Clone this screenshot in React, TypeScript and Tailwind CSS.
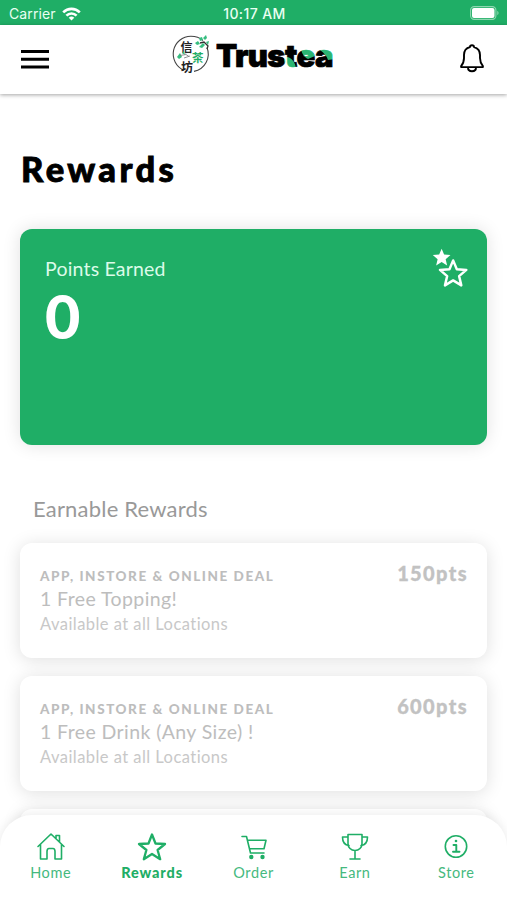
import type { ReactNode } from "react"

const STAR = "M12 1.8 15 9 22.8 9.6 16.9 14.7 18.7 22.3 12 18.2 5.3 22.3 7.1 14.7 1.2 9.6 9 9Z"

const rewards = [
  { tag: "APP, INSTORE & ONLINE DEAL", title: "1 Free Topping!", points: "150pts" },
  { tag: "APP, INSTORE & ONLINE DEAL", title: "1 Free Drink (Any Size) !", points: "600pts" },
]

function StatusBar() {
  return (
    <div className="grid h-[25px] shrink-0 grid-cols-3 items-center bg-[#1fae66] pr-[7px] pl-[9px] text-[#e9fff2]">
      <div className="flex items-center gap-[6px] pt-[2px] font-['Inter'] text-[14px]">
        <span className="tracking-[0.1px]">Carrier</span>
        <svg width="19" height="14" viewBox="0 0 19 14" fill="none" stroke="white" strokeWidth="2.6">
          <path d="M1.2 5.3a11.8 11.8 0 0 1 16.6 0" />
          <path d="M4.4 8.6a7.2 7.2 0 0 1 10.2 0" />
          <path d="M9.5 13.6 6.7 10.8a4 4 0 0 1 5.6 0Z" fill="white" stroke="none" />
        </svg>
      </div>
      <div className="pt-[2px] text-center font-['Inter'] text-[14px] font-medium tracking-[0.4px] whitespace-nowrap">10:17 AM</div>
      <svg className="justify-self-end" width="30" height="14" viewBox="0 0 30 14">
        <rect x="0.6" y="0.6" width="25.3" height="12.8" rx="3.6" fill="none" stroke="#8ed7b0" strokeWidth="1.1" />
        <rect x="2" y="2" width="22.5" height="10" rx="2" fill="white" />
        <path d="M27.3 4.8c1.7.7 1.7 3.7 0 4.4Z" fill="#8ed7b0" />
      </svg>
    </div>
  )
}

function Logo() {
  return (
    <svg className="overflow-visible" width="166" height="46" viewBox="0 0 166 46">
      {/* Seal */}
      <g fill="none" stroke="#444" strokeWidth="1.1">
        <path d="M13 36.3A17.7 17.7 0 0 1 20 2.3c5 0 9 1.6 12 4.2" />
        <path d="M36 13.5A17.7 17.7 0 0 1 23 37.4" />
      </g>
      <g fontFamily="'Noto Sans CJK TC', sans-serif" fontWeight="700">
        <text x="9.5" y="17.5" fontSize="12" fill="#222">信</text>
        <text x="21" y="28" fontSize="11.5" fill="#1fae66">茶</text>
        <text x="10" y="37.5" fontSize="12" fill="#222">坊</text>
      </g>
      <path d="m24 9 3-2 2 3-3 1Zm4-5 3-1 1 3-3 1Zm4 0 3-3 1 3-2 2Zm3 4 3-1-1 4Zm-7 5 4-4 2 2-3 3Zm-22 10 3-4 2 4-3 2Zm5-4 2-2 1 4Z" fill="#36bd80" />
      <path d="m29 9 4-1 4 4-1 3" fill="none" stroke="#333" strokeWidth="1.3" />
      <path d="M9 21.5l6-1 3 2M13 24l6-2" fill="none" stroke="#777" strokeWidth="0.8" />

      {/* Wordmark, tea leaves painted into the last letters */}
      <defs>
        <pattern id="leaves" patternUnits="userSpaceOnUse" width="180" height="46">
          <rect width="180" height="46" fill="black" />
          <g fill="#2bb673">
            <path d="M113 23c5-1 11 3 12 12h-8c-3-3-4-7-4-12Z" />
            <path d="M130 15c6-2 11 0 14 7l-7 3c-4-2-6-5-7-10Z" />
            <path d="M149 16c7-4 14-1 15 9l-7 1c-1-4-4-7-8-10Z" />
          </g>
        </pattern>
      </defs>
      <text x="45" y="33" fontFamily="'Inter', sans-serif" fontWeight="900" fontSize="31" letterSpacing="-0.6" fill="url(#leaves)" stroke="url(#leaves)" strokeWidth="0.7">Trustea</text>
    </svg>
  )
}

function Header() {
  return (
    <header className="z-10 flex h-[69px] shrink-0 items-start justify-between bg-white pr-[22px] pl-[21px] shadow-[0_1px_4px_rgba(0,0,0,0.36)]">
      <svg className="mt-[24px]" width="28" height="21" viewBox="0 0 28 21" stroke="black" strokeWidth="3">
        <path d="M0 2.5h28M0 10.3h28M0 18.1h28" />
      </svg>
      <div className="mt-[9px]"><Logo /></div>
      <svg className="mt-[19px]" width="26" height="29" viewBox="0 0 26 29" fill="none" stroke="black" strokeWidth="1.9" strokeLinejoin="round">
        <path d="M11 3.1c0-2.4 4-2.4 4 0 4 1 6 4 6 8v3c0 4 .8 5.5 2.9 8v1H2.1v-1C4.2 19.6 5 18 5 14v-3c0-4 2-7 6-7.9Z" />
        <path d="M9 23.5c0 5 8 5 8 0" />
      </svg>
    </header>
  )
}

function PointsCard() {
  return (
    <section className="flex h-[216px] items-start justify-between rounded-[12px] bg-[#1fae66] pr-[18px] pl-[25px] text-white shadow-[0_0_18px_rgba(0,0,0,0.12)]">
      <div>
        <p className="mt-[27px] text-[19.5px] leading-[26px] tracking-[0.2px] text-[#dcfbe9]">Points Earned</p>
        <p className="text-[61px] leading-[67px] font-black">0</p>
      </div>
      <svg className="mt-[19px]" width="38" height="40" viewBox="0 0 38 40">
        <path d={STAR} transform="translate(.8 -.8) scale(.82)" fill="white" />
        <path d={STAR} transform="translate(7.5 10.2) scale(1.22)" fill="#1fae66" stroke="white" strokeWidth="2" strokeLinejoin="round" />
      </svg>
    </section>
  )
}

function RewardCard({ tag, title, points }: (typeof rewards)[number]) {
  return (
    <li className="flex h-[115px] shrink-0 items-start justify-between rounded-[12px] bg-white px-[20px] shadow-[0_2px_18px_rgba(0,0,0,0.13)]">
      <div className="pt-[23px] whitespace-nowrap text-[#bdbdbd]">
        <p className="text-[13.5px] leading-[20px] font-black tracking-[1.57px]">{tag}</p>
        <p className="text-[19.5px] leading-[26px] tracking-[0.4px]">{title}</p>
        <p className="pt-px text-[16.5px] leading-[22px] tracking-[0.45px] text-[#c8c8c8]">Available at all Locations</p>
      </div>
      <p className="mt-[17px] mr-[-1px] text-[20px] leading-[26px] font-black tracking-[1.4px] text-[#c2c2c2] [-webkit-text-stroke:0.3px_#c2c2c2]">{points}</p>
    </li>
  )
}

function NavItem({ label, active, children }: { label: string; active?: boolean; children: ReactNode }) {
  return (
    <a className="flex flex-1 flex-col items-center">
      <svg width="30" height="30" viewBox="0 0 30 30" fill="none" stroke="#1fae66" strokeWidth="1.6" strokeLinecap="round" strokeLinejoin="round">
        {children}
      </svg>
      <span className={active ? "mt-px text-[14.5px] leading-[20px] font-black tracking-[0.9px] text-[#1fae66]" : "mt-px text-[14.5px] leading-[20px] tracking-[0.6px] text-[#45b97e]"}>
        {label}
      </span>
    </a>
  )
}

function TabBar() {
  return (
    <nav className="z-10 flex h-[85px] shrink-0 rounded-t-[32px] bg-white pt-[17px] shadow-[0_0_12px_rgba(0,0,0,0.09)]">
      <NavItem label="Home">
        <path d="M2 14.5 15 2l13 12.5M4.5 12.5V27H11V19.5c0-2 1-3 2-3h4c1 0 2 1 2 3V27h6.5V12.5M20 6.5V3.5h3.5V10" />
      </NavItem>
      <NavItem label="Rewards" active>
        <path d="M15 2.5 18.5 11.5 28 12 20.6 18 23.2 27.2 15 22 6.8 27.2 9.4 18 2 12 11.5 11.5Z" strokeWidth="2.3" />
      </NavItem>
      <NavItem label="Order">
        <path d="M3 4.5h4.5L11.5 21H25M8.6 8.2H27L25 16.8H10.6" />
        <circle cx="12.3" cy="25" r="1.4" fill="#1fae66" />
        <circle cx="23.5" cy="25" r="1.4" fill="#1fae66" />
      </NavItem>
      <NavItem label="Earn">
        <path d="M8 2.5h14v9c0 4-3 7-7 7s-7-3-7-7ZM8 5H2.5c0 5 2 8 6.5 8.5M22 5h5.5c0 5-2 8-6.5 8.5M15 18.5V27M10 27h10" />
      </NavItem>
      <NavItem label="Store">
        <circle cx="15" cy="14.5" r="10.7" />
        <path d="M12.5 13h2.8v6.5M12 19.8h6.5" strokeWidth="1.9" />
        <circle cx="15" cy="9" r="1.3" fill="#1fae66" stroke="none" />
      </NavItem>
    </nav>
  )
}

export default function App() {
  return (
    <div className="flex h-[900px] w-[507px] flex-col overflow-hidden bg-white font-['Lato',sans-serif]">
      <StatusBar />
      <Header />
      <main className="min-h-0 flex-1 px-[20px] pt-[52px]">
        <h1 className="pl-px text-[34.5px] leading-[46px] font-black tracking-[3.4px] [-webkit-text-stroke:0.9px_black]">Rewards</h1>
        <div className="mt-[37px]"><PointsCard /></div>
        <h2 className="mt-[47px] pl-[13px] text-[22px] leading-[33px] tracking-[0.2px] text-[#999]">Earnable Rewards</h2>
        <ul className="mt-[18px] flex flex-col gap-[18px]">
          {rewards.map((reward) => <RewardCard key={reward.points} {...reward} />)}
          <li className="h-[115px] shrink-0 rounded-[12px] bg-white shadow-[0_2px_18px_rgba(0,0,0,0.13)]" />
        </ul>
      </main>
      <TabBar />
    </div>
  )
}
